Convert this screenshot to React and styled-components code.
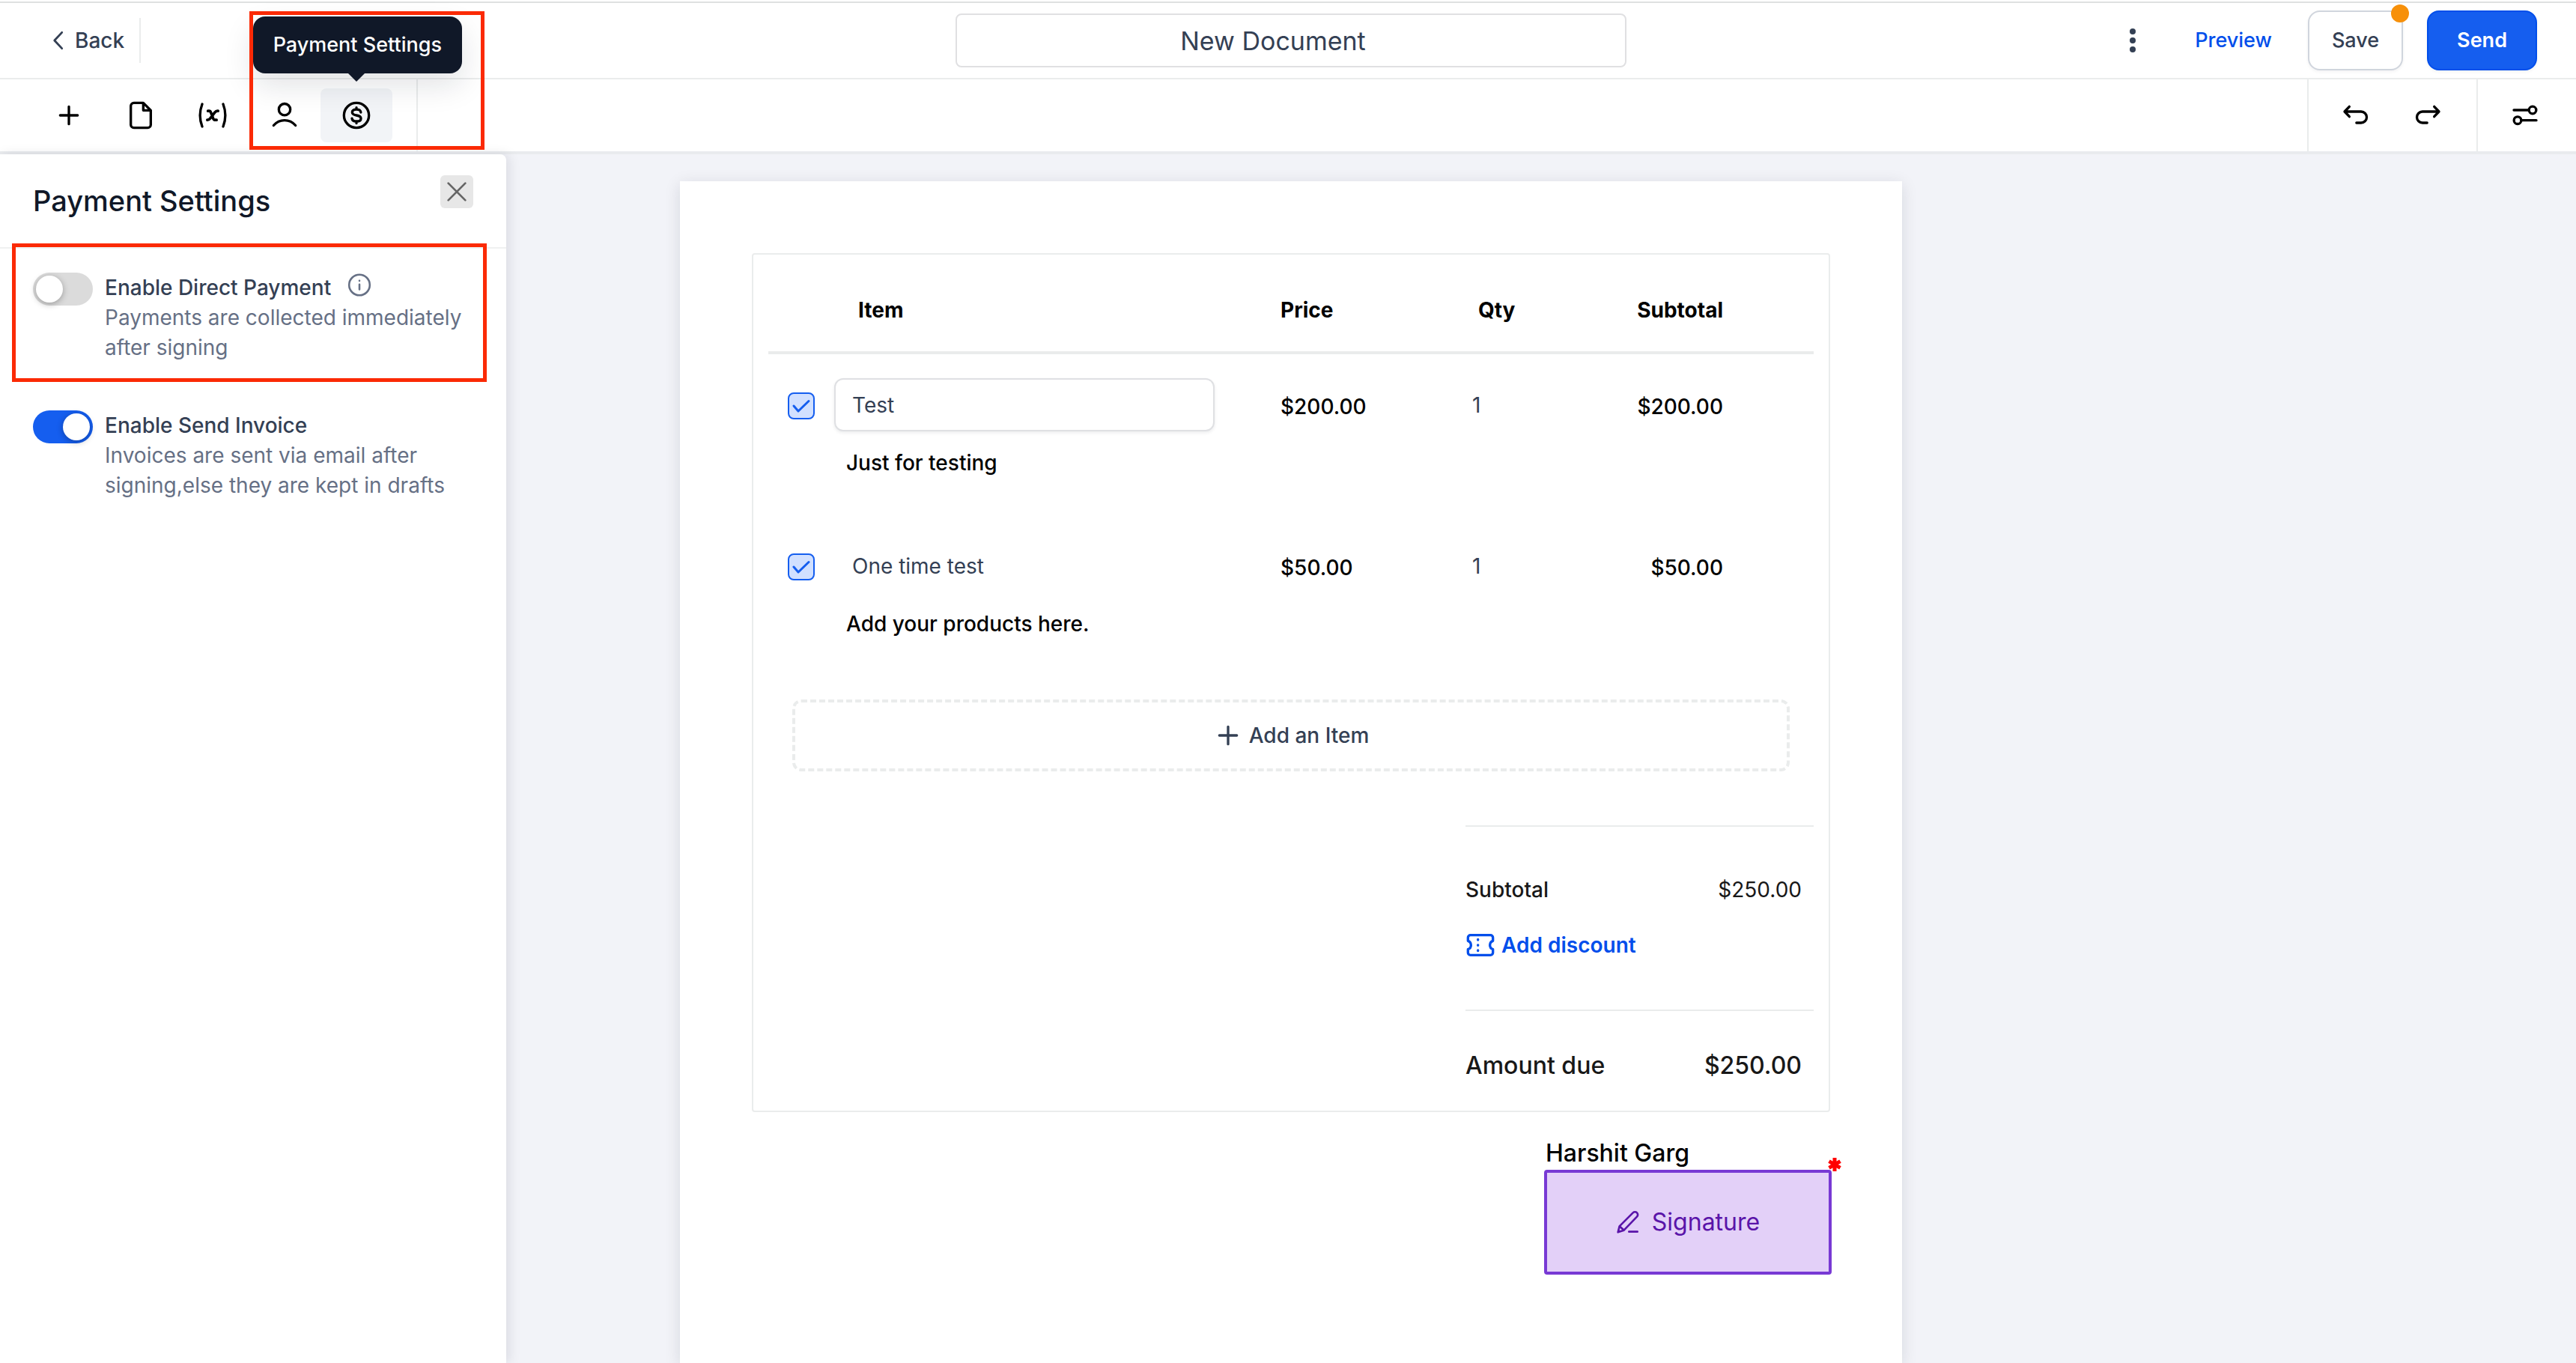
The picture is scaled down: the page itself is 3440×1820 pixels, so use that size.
import React, { useState } from 'react';
import styled, { createGlobalStyle, css } from 'styled-components';

const GlobalStyle = createGlobalStyle`
  * {
    box-sizing: border-box;
  }

  body {
    margin: 0;
    background: #ffffff;
    font-family: Inter, 'Liberation Sans', sans-serif;
    font-size: 28px;
    line-height: 40px;
    color: #344054;
  }

  button, input {
    font: inherit;
    color: inherit;
  }

  button {
    padding: 0;
    border: 0;
    background: none;
    cursor: pointer;
  }
`;

const Page = styled.div`
  display: flex;
  flex-direction: column;
  min-height: 100vh;
  padding-top: 2px;
`;

const TopBar = styled.header`
  display: grid;
  grid-template-columns: 1fr 896px 1fr;
  align-items: center;
  height: 104px;
  padding: 0 52px 0 60px;
  background: #ffffff;
  border-top: 2px solid #dfe1e1;
  border-bottom: 2px solid #eaecec;
`;

const BackButton = styled.button`
  display: flex;
  align-items: center;
  justify-self: start;
  gap: 6px;
  height: 60px;
  padding-right: 20px;
  border-right: 2px solid #eaecec;
  font-weight: 500;
`;

const TitleInput = styled.input`
  width: 100%;
  height: 72px;
  padding: 0 48px 0 0;
  border: 2px solid #e0e0e2;
  border-radius: 8px;
  font-size: 34px;
  text-align: center;
  outline: none;
`;

const TopActions = styled.div`
  display: flex;
  align-items: center;
  justify-content: flex-end;
  font-size: 27px;
`;

const MenuButton = styled.button`
  display: flex;
  margin-right: 64px;
`;

const PreviewLink = styled.a`
  margin-right: 48px;
  color: #004eeb;
  font-weight: 500;
  text-decoration: none;
`;

const ActionButton = styled.button`
  position: relative;
  height: 80px;
  padding: 0 ${({ $primary }) => ($primary ? '38px' : '30px')};
  border: 2px solid ${({ $primary }) => ($primary ? '#004eeb' : '#d0d5dd')};
  border-radius: 16px;
  background: ${({ $primary }) => ($primary ? '#155eef' : '#ffffff')};
  color: ${({ $primary }) => ($primary ? '#ffffff' : '#344054')};
  font-weight: ${({ $primary }) => ($primary ? 600 : 500)};
  box-shadow: 0 2px 4px rgba(16, 24, 40, 0.05);

  & + & {
    margin-left: 32px;
  }
`;

const UnsavedDot = styled.span`
  position: absolute;
  top: -10px;
  right: -10px;
  width: 24px;
  height: 24px;
  border-radius: 50%;
  background: #f79009;
`;

const ToolBar = styled.nav`
  display: flex;
  justify-content: space-between;
  height: 100px;
  background: #ffffff;
  border-bottom: 4px solid #e9ebee;
`;

const ToolGroup = styled.div`
  display: flex;
  align-items: center;
  height: 96px;
  padding: ${({ $padding }) => $padding};

  ${({ $line }) => $line === 'right' && css`border-right: 2px solid #eaecec;`}
  ${({ $line }) => $line === 'left' && css`border-left: 2px solid #eaecec;`}
`;

const ToolButton = styled.button`
  position: relative;
  display: flex;
  align-items: center;
  justify-content: center;
  width: 96px;
  height: 72px;
  border-radius: 8px;
  background: ${({ $active }) => ($active ? '#f2f4f7' : 'transparent')};
  color: #000000;
`;

const Tooltip = styled.span`
  position: absolute;
  right: -93px;
  bottom: 92px;
  z-index: 3;
  padding: 18px 27px;
  border-radius: 16px;
  background: #101828;
  color: #ffffff;
  font-size: 27px;
  font-weight: 500;
  white-space: nowrap;
  box-shadow: 0 16px 40px rgba(16, 24, 40, 0.12);

  &::after {
    content: '';
    position: absolute;
    right: 130px;
    top: 100%;
    border: 11px solid transparent;
    border-top-color: #101828;
    border-bottom: 0;
  }
`;

const Tools = styled.div`
  position: relative;
`;

const ToolsMark = styled.div`
  position: absolute;
  top: -91px;
  left: 333px;
  z-index: 4;
  width: 314px;
  height: 185px;
  border: 5px solid #fb2a05;
  pointer-events: none;
`;

const Workspace = styled.div`
  display: grid;
  grid-template-columns: 676px 1fr;
  flex: 1;
  background: #f2f3f8;
`;

const SidePanel = styled.aside`
  background: #ffffff;
  border-top-right-radius: 8px;
  box-shadow: 4px 0 16px rgba(16, 24, 40, 0.1);
`;

const PanelHeader = styled.div`
  display: flex;
  align-items: flex-start;
  justify-content: space-between;
  height: 126px;
  padding: 28px 44px 0;
  border-bottom: 2px solid #f0f1f1;
`;

const PanelTitle = styled.h2`
  margin: 10px 0 0;
  color: #101828;
  font-size: 38px;
  line-height: 48px;
  font-weight: 500;
`;

const CloseButton = styled.button`
  display: flex;
  align-items: center;
  justify-content: center;
  width: 44px;
  height: 44px;
  border-radius: 6px;
  background: #e7e7e7;
  color: #666666;
`;

const SettingRow = styled.div`
  position: relative;
  display: flex;
  gap: 16px;
  padding: ${({ $first }) => ($first ? '32px' : '64px')} 36px 0 44px;
`;

const RowMark = styled.div`
  position: absolute;
  top: -7px;
  left: 16px;
  right: 26px;
  height: 185px;
  border: 5px solid #fb2a05;
  pointer-events: none;
`;

const Switch = styled.input`
  appearance: none;
  flex: none;
  width: 80px;
  height: 44px;
  margin: 0;
  padding: 4px;
  border-radius: 22px;
  background: #dbdbdb;
  cursor: pointer;

  &::before {
    content: '';
    display: block;
    width: 36px;
    height: 36px;
    border-radius: 50%;
    background: #ffffff;
    box-shadow: 0 2px 8px rgba(0, 0, 0, 0.3);
  }

  &:checked {
    background: #155eef;
  }

  &:checked::before {
    margin-left: auto;
  }
`;

const SettingHead = styled.div`
  display: flex;
  gap: 20px;
  height: 40px;
`;

const SettingLabel = styled.label`
  font-weight: 500;
`;

const SettingText = styled.p`
  margin: 0;
  color: #667085;
`;

const Canvas = styled.main`
  display: flex;
  justify-content: center;
  padding: 36px 668px 0 0;
`;

const Sheet = styled.section`
  width: 1632px;
  padding: 96px;
  background: #ffffff;
  box-shadow: 0 4px 20px rgba(16, 24, 40, 0.12);
`;

const InvoiceBlock = styled.div`
  padding: 0 20px 38px;
  border: 2px solid #eaecec;
  border-radius: 4px;
`;

const ItemTable = styled.table`
  width: 100%;
  border-collapse: separate;
  border-spacing: 0;
  table-layout: fixed;
  color: #000000;

  th {
    padding: 54px 0 35px;
    border-bottom: 4px solid #eaecec;
    font-weight: 700;
    text-align: left;
  }

  td {
    height: 215px;
    padding: 32px 0 0;
    vertical-align: top;
  }
`;

const HeadCell = styled.th`
  && {
    padding-left: ${({ $indent }) => $indent || 0}px;
    padding-right: ${({ $end }) => ($end ? 121 : 0)}px;
    text-align: ${({ $end }) => ($end ? 'right' : 'left')};
  }
`;

const CheckCell = styled.td`
  && {
    padding: 51px 0 0 26px;
  }
`;

const Check = styled.input`
  appearance: none;
  display: block;
  width: 36px;
  height: 36px;
  margin: 0;
  border: 2px solid #155eef;
  border-radius: 8px;
  background: #d1e0ff url("data:image/svg+xml,%3Csvg xmlns='http://www.w3.org/2000/svg' viewBox='0 0 32 32' fill='none' stroke='%23155eef' stroke-width='3' stroke-linecap='round' stroke-linejoin='round'%3E%3Cpath d='M6 16l6 7L26 9.500'/%3E%3C/svg%3E") center / 100% no-repeat;
`;

const ItemInput = styled.input`
  display: block;
  width: 508px;
  height: 71px;
  padding: 0 22px;
  border: 2px solid ${({ $boxed }) => ($boxed ? '#dfe0e3' : 'transparent')};
  border-radius: 12px;
  background: #ffffff;
  color: #344054;
  box-shadow: ${({ $boxed }) => ($boxed ? '0 2px 4px rgba(16, 24, 40, 0.08)' : 'none')};
  outline: none;
`;

const ItemNote = styled.div`
  padding: 22px 0 0 16px;
  font-weight: 500;
`;

const Money = styled.div`
  padding: 18px ${({ $end }) => ($end ? 121 : 0)}px 0 0;
  font-weight: 500;
  text-align: ${({ $end }) => ($end ? 'right' : 'left')};
`;

const QtyInput = styled.input`
  display: block;
  width: 120px;
  height: 71px;
  padding: 0;
  border: 0;
  background: none;
  color: #344054;
  outline: none;
`;

const AddItem = styled.button`
  display: flex;
  align-items: center;
  justify-content: center;
  gap: 8px;
  width: calc(100% - 64px);
  height: 96px;
  margin: 31px 32px 72px;
  border: 4px dashed #eaecec;
  border-radius: 12px;
  font-weight: 500;
`;

const Totals = styled.div`
  width: 465px;
  margin-left: auto;
  color: #181818;
`;

const TotalGroup = styled.div`
  display: flex;
  flex-direction: column;
  gap: 34px;
  padding: ${({ $due }) => ($due ? '51px 16px 0 0' : '64px 16px 66px 0')};
  border-top: 2px solid #eaecec;
  font-size: ${({ $due }) => ($due ? '32px' : '28px')};
  font-weight: 500;
`;

const TotalRow = styled.div`
  display: flex;
  justify-content: space-between;
  line-height: ${({ $due }) => ($due ? '44px' : '40px')};
`;

const TotalValue = styled.span`
  font-weight: ${({ $due }) => ($due ? 500 : 400)};
`;

const DiscountButton = styled.button`
  display: flex;
  align-items: center;
  gap: 8px;
  color: #004eeb;
  font-weight: 600;
`;

const SignField = styled.div`
  width: 384px;
  margin: 32px -2px 0 auto;
`;

const SignerName = styled.div`
  padding-left: 2px;
  color: #000000;
  font-size: 32px;
  line-height: 45px;
  font-weight: 500;
`;

const SignButton = styled.button`
  position: relative;
  display: flex;
  align-items: center;
  justify-content: center;
  gap: 16px;
  width: 100%;
  height: 140px;
  border: 4px solid #7839d4;
  border-radius: 4px;
  background: #e3d0f8;
  color: #5a14a9;
  font-size: 32px;
`;

const RequiredMark = styled.svg`
  position: absolute;
  top: -20px;
  right: -17px;
  width: 18px;
  height: 18px;
  stroke: #ff0000;
  stroke-width: 5;
`;

const Icon = ({ size = 40, stroke = 2, children }) => (
  <svg
    width={size}
    height={size}
    viewBox="0 0 24 24"
    fill="none"
    stroke="currentColor"
    strokeWidth={stroke}
    strokeLinecap="round"
    strokeLinejoin="round"
    aria-hidden="true"
  >
    {children}
  </svg>
);

const PlusIcon = () => (
  <Icon><path d="M12 5v14M5 12h14" /></Icon>
);

const FileIcon = () => (
  <Icon><path d="M14 2H6.500A2.500 2.500 0 0 0 4 4.500v15A2.500 2.500 0 0 0 6.500 22h11a2.500 2.500 0 0 0 2.500-2.500V8zM14 2v6h6" /></Icon>
);

const VariableIcon = () => (
  <Icon>
    <path d="M3.600 3C1.500 8.500 1.500 15.500 3.600 21M20.400 3c2.100 5.500 2.100 12.500 0 18" />
    <path strokeWidth="2.200" d="M8.200 8.500h.9c.8 0 1.200.4 1.400 1l1.900 5c.3.700.8 1.200 1.600 1.200h1.100M16.300 8.500c-1.100-.2-1.900.3-2.600 1.200l-3.700 4.800c-.7.900-1.400 1.300-2.300 1.200" />
  </Icon>
);

const UserIcon = () => (
  <Icon><circle cx="12" cy="7.300" r="4.600" /><path d="M3.200 20.100c2.300-2.600 5.300-4.100 8.800-4.100s6.500 1.500 8.800 4.100" /></Icon>
);

const DollarIcon = () => (
  <Icon>
    <circle cx="12" cy="12" r="10" />
    <path d="M15.500 9.600c-.2-1.500-1.500-2.300-3.500-2.300s-3.400.8-3.400 2.300 1.200 2 3.400 2.400 3.600 1 3.600 2.500-1.500 2.300-3.600 2.300-3.400-.8-3.600-2.300M12 5.800v1.400M12 16.900v1.400" />
  </Icon>
);

const initialItems = [
  { id: 1, name: 'Test', note: 'Just for testing', price: '$200.00', qty: 1, subtotal: '$200.00', boxed: true },
  { id: 2, name: 'One time test', note: 'Add your products here.', price: '$50.00', qty: 1, subtotal: '$50.00' },
];

const App = () => {

  const [title, setTitle] = useState('New Document');
  const [items, setItems] = useState(initialItems);

  const handleChangeItem = (id, field, value) => {
    setItems(items.map((row) => (row.id === id ? { ...row, [field]: value } : row)));
  };

  return (
    <Page>
      <GlobalStyle />

      <TopBar>
        <BackButton>
          <Icon size={34}><path d="M16 4.500L9 12l7 7.500" /></Icon>
          Back
        </BackButton>
        <TitleInput aria-label="Document title" value={title} onChange={(e) => setTitle(e.target.value)} />
        <TopActions>
          <MenuButton aria-label="More">
            <svg width="38" height="38" viewBox="0 0 38 38" fill="#344054">
              <circle cx="19" cy="7" r="4" />
              <circle cx="19" cy="19" r="4" />
              <circle cx="19" cy="31" r="4" />
            </svg>
          </MenuButton>
          <PreviewLink href="#preview">Preview</PreviewLink>
          <ActionButton>Save<UnsavedDot /></ActionButton>
          <ActionButton $primary>Send</ActionButton>
        </TopActions>
      </TopBar>

      <ToolBar>
        <Tools>
          <ToolGroup $padding="0 32px 0 44px" $line="right">
            <ToolButton aria-label="Add"><PlusIcon /></ToolButton>
            <ToolButton aria-label="Pages"><FileIcon /></ToolButton>
            <ToolButton aria-label="Variables"><VariableIcon /></ToolButton>
            <ToolButton aria-label="Recipients"><UserIcon /></ToolButton>
            <ToolButton aria-label="Payments" $active>
              <DollarIcon />
              <Tooltip role="tooltip">Payment Settings</Tooltip>
            </ToolButton>
          </ToolGroup>
          <ToolsMark />
        </Tools>
        <ToolGroup>
          <ToolGroup $padding="0 17px 0 15px" $line="left">
            <ToolButton aria-label="Undo">
              <Icon><path d="M6.800 5L3 9l3.800 4M3 9h13.200a4.500 4.500 0 0 1 0 9h-3.700" /></Icon>
            </ToolButton>
            <ToolButton aria-label="Redo">
              <Icon><path d="M17.200 5L21 9l-3.800 4M21 9H7.800a4.500 4.500 0 0 0 0 9h3.700" /></Icon>
            </ToolButton>
          </ToolGroup>
          <ToolGroup $padding="0 20px 0 15px" $line="left">
            <ToolButton aria-label="Document settings">
              <Icon><circle cx="18" cy="7.800" r="2.900" /><circle cx="6" cy="16" r="2.900" /><path d="M3 7.800h12M9 16h12" /></Icon>
            </ToolButton>
          </ToolGroup>
        </ToolGroup>
      </ToolBar>

      <Workspace>
        <SidePanel>
          <PanelHeader>
            <PanelTitle>Payment Settings</PanelTitle>
            <CloseButton aria-label="Close">
              <Icon size={32}><path d="M3.500 3.500l17 17M20.500 3.500l-17 17" /></Icon>
            </CloseButton>
          </PanelHeader>
          <SettingRow $first>
            <RowMark />
            <Switch type="checkbox" id="direct" />
            <div>
              <SettingHead>
                <SettingLabel htmlFor="direct">Enable Direct Payment</SettingLabel>
                <Icon size={36} stroke={1.7}>
                  <g stroke="#667085"><circle cx="12" cy="11" r="9.200" /><path d="M12 10.500v4.500M12 7.200v.1" /></g>
                </Icon>
              </SettingHead>
              <SettingText>Payments are collected immediately after signing</SettingText>
            </div>
          </SettingRow>
          <SettingRow>
            <Switch type="checkbox" id="invoice" defaultChecked />
            <div>
              <SettingHead>
                <SettingLabel htmlFor="invoice">Enable Send Invoice</SettingLabel>
              </SettingHead>
              <SettingText>Invoices are sent via email after signing,else they are kept in drafts</SettingText>
            </div>
          </SettingRow>
        </SidePanel>

        <Canvas>
          <Sheet>
            <InvoiceBlock>
              <ItemTable>
                <colgroup>
                  <col width="88" />
                  <col width="596" />
                  <col width="256" />
                  <col width="180" />
                  <col />
                </colgroup>
                <thead>
                  <tr>
                    <HeadCell aria-label="Selected" />
                    <HeadCell $indent={32}>Item</HeadCell>
                    <HeadCell>Price</HeadCell>
                    <HeadCell $indent={8}>Qty</HeadCell>
                    <HeadCell $end>Subtotal</HeadCell>
                  </tr>
                </thead>
                <tbody>
                  {items.map((row) => (
                    <tr key={row.id}>
                      <CheckCell><Check type="checkbox" aria-label={row.name} defaultChecked /></CheckCell>
                      <td>
                        <ItemInput
                          $boxed={row.boxed}
                          aria-label="Item name"
                          value={row.name}
                          onChange={(e) => handleChangeItem(row.id, 'name', e.target.value)}
                        />
                        <ItemNote>{row.note}</ItemNote>
                      </td>
                      <td><Money>{row.price}</Money></td>
                      <td>
                        <QtyInput
                          aria-label="Quantity"
                          value={row.qty}
                          onChange={(e) => handleChangeItem(row.id, 'qty', e.target.value)}
                        />
                      </td>
                      <td><Money $end>{row.subtotal}</Money></td>
                    </tr>
                  ))}
                </tbody>
              </ItemTable>

              <AddItem><PlusIcon />Add an Item</AddItem>

              <Totals>
                <TotalGroup>
                  <TotalRow><span>Subtotal</span><TotalValue>$250.00</TotalValue></TotalRow>
                  <DiscountButton>
                    <Icon>
                      <path d="M4 4h16a2 2 0 0 1 2 2v2.600a3.600 3.600 0 0 0 0 6.800V18a2 2 0 0 1-2 2H4a2 2 0 0 1-2-2v-2.600a3.600 3.600 0 0 0 0-6.800V6a2 2 0 0 1 2-2z" />
                      <path d="M10 7.500v.3M10 11.900v.3M10 16.200v.3" />
                    </Icon>
                    Add discount
                  </DiscountButton>
                </TotalGroup>
                <TotalGroup $due>
                  <TotalRow $due><span>Amount due</span><TotalValue $due>$250.00</TotalValue></TotalRow>
                </TotalGroup>
              </Totals>
            </InvoiceBlock>

            <SignField>
              <SignerName>Harshit Garg</SignerName>
              <SignButton>
                <Icon size={32}>
                  <path d="M2 22l1.500-6L17 2.500a2.800 2.800 0 0 1 4 4L8 20zM3.500 16l4.500 4M13 21.500h8.500" />
                </Icon>
                Signature
                <RequiredMark viewBox="0 0 18 18" aria-label="Required">
                  <path d="M9 0v18M1.500 4.700l15 8.600M16.500 4.700l-15 8.600" />
                </RequiredMark>
              </SignButton>
            </SignField>
          </Sheet>
        </Canvas>
      </Workspace>
    </Page>
  );
};

export default App;
